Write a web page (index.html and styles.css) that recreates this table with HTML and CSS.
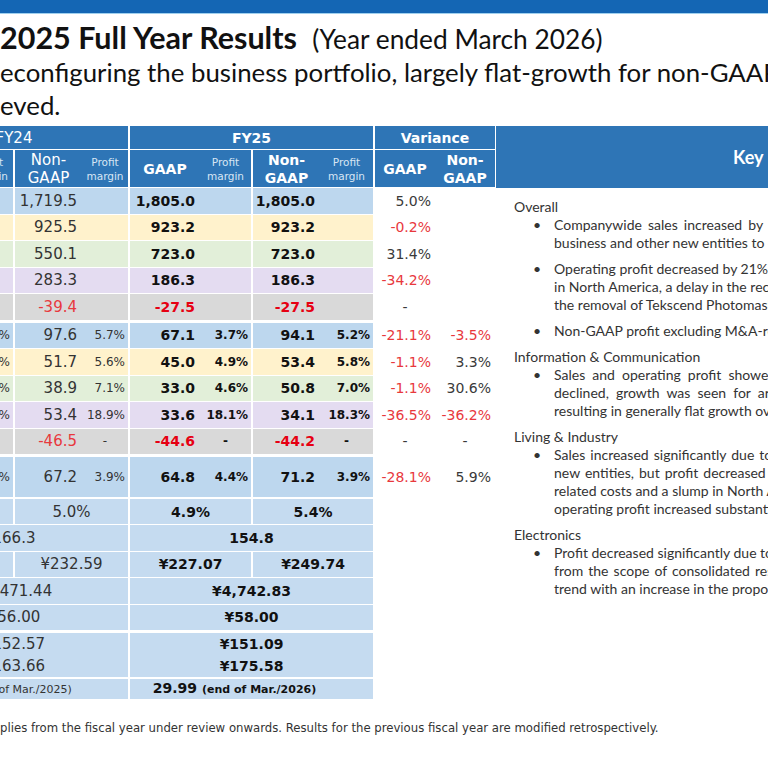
FILE: index.html
```html
<!DOCTYPE html>
<html lang="en">

<head>
    <meta charset="UTF-8">
    <meta name="viewport" content="width=device-width, initial-scale=1.0">
    <title>FY2025 Full Year Results</title>
    <link rel="stylesheet" href="styles.css">
</head>

<body>
    <div class="topbar"></div>
    <div class="title">
        <h1>2025 Full Year Results <span class="title-sub">(Year ended March 2026)</span></h1>
        <p class="lead">econfiguring the business portfolio, largely flat-growth for non-GAAP</p>
        <p class="lead">eved.</p>
    </div>

    <div class="main">
        <table class="results">
            <colgroup>
                <col style="width:66px"><col style="width:47px">
                <col style="width:69px"><col style="width:46px">
                <col style="width:72px"><col style="width:51px">
                <col style="width:69px"><col style="width:53px">
                <col style="width:62px"><col style="width:60px">
            </colgroup>
            <thead>
                <tr class="head1">
                    <th colspan="4">FY24</th>
                    <th colspan="4" class="gs b">FY25</th>
                    <th colspan="2" class="gs b small">Variance</th>
                </tr>
                <tr class="head2">
                    <th>GAAP</th>
                    <th class="pm-h">Profit<br>margin</th>
                    <th class="gs">Non-<br>GAAP</th>
                    <th class="pm-h">Profit<br>margin</th>
                    <th class="gs b">GAAP</th>
                    <th class="pm-h">Profit<br>margin</th>
                    <th class="gs b">Non-<br>GAAP</th>
                    <th class="pm-h">Profit<br>margin</th>
                    <th class="gs b small">GAAP</th>
                    <th class="b small">Non-<br>GAAP</th>
                </tr>
            </thead>
            <tbody>
                <tr class="blue">
                    <td class="val">1,719.5</td><td class="pm"></td>
                    <td class="val gs">1,719.5</td><td class="pm"></td>
                    <td class="val gs b">1,805.0</td><td class="pm"></td>
                    <td class="val gs b">1,805.0</td><td class="pm"></td>
                    <td class="var gs">5.0%</td><td class="var"></td>
                </tr>
                <tr class="yellow">
                    <td class="val">925.5</td><td class="pm"></td>
                    <td class="val gs">925.5</td><td class="pm"></td>
                    <td class="val gs b">923.2</td><td class="pm"></td>
                    <td class="val gs b">923.2</td><td class="pm"></td>
                    <td class="var gs neg">-0.2%</td><td class="var"></td>
                </tr>
                <tr class="green">
                    <td class="val">550.1</td><td class="pm"></td>
                    <td class="val gs">550.1</td><td class="pm"></td>
                    <td class="val gs b">723.0</td><td class="pm"></td>
                    <td class="val gs b">723.0</td><td class="pm"></td>
                    <td class="var gs">31.4%</td><td class="var"></td>
                </tr>
                <tr class="purple">
                    <td class="val">283.3</td><td class="pm"></td>
                    <td class="val gs">283.3</td><td class="pm"></td>
                    <td class="val gs b">186.3</td><td class="pm"></td>
                    <td class="val gs b">186.3</td><td class="pm"></td>
                    <td class="var gs neg">-34.2%</td><td class="var"></td>
                </tr>
                <tr class="grey">
                    <td class="val neg">-39.4</td><td class="pm"></td>
                    <td class="val gs neg">-39.4</td><td class="pm"></td>
                    <td class="val gs b neg">-27.5</td><td class="pm"></td>
                    <td class="val gs b neg">-27.5</td><td class="pm"></td>
                    <td class="var gs dash">-</td><td class="var"></td>
                </tr>

                <tr class="blue sep3">
                    <td class="val">85.0</td><td class="pm">4.9%</td>
                    <td class="val gs">97.6</td><td class="pm">5.7%</td>
                    <td class="val gs b">67.1</td><td class="pm b">3.7%</td>
                    <td class="val gs b">94.1</td><td class="pm b">5.2%</td>
                    <td class="var gs neg">-21.1%</td><td class="var neg">-3.5%</td>
                </tr>
                <tr class="yellow">
                    <td class="val">45.5</td><td class="pm">4.9%</td>
                    <td class="val gs">51.7</td><td class="pm">5.6%</td>
                    <td class="val gs b">45.0</td><td class="pm b">4.9%</td>
                    <td class="val gs b">53.4</td><td class="pm b">5.8%</td>
                    <td class="var gs neg">-1.1%</td><td class="var">3.3%</td>
                </tr>
                <tr class="green">
                    <td class="val">33.4</td><td class="pm">6.1%</td>
                    <td class="val gs">38.9</td><td class="pm">7.1%</td>
                    <td class="val gs b">33.0</td><td class="pm b">4.6%</td>
                    <td class="val gs b">50.8</td><td class="pm b">7.0%</td>
                    <td class="var gs neg">-1.1%</td><td class="var">30.6%</td>
                </tr>
                <tr class="purple">
                    <td class="val">52.9</td><td class="pm">18.7%</td>
                    <td class="val gs">53.4</td><td class="pm">18.9%</td>
                    <td class="val gs b">33.6</td><td class="pm b">18.1%</td>
                    <td class="val gs b">34.1</td><td class="pm b">18.3%</td>
                    <td class="var gs neg">-36.5%</td><td class="var neg">-36.2%</td>
                </tr>
                <tr class="grey">
                    <td class="val neg">-46.3</td><td class="pm dash">-</td>
                    <td class="val gs neg">-46.5</td><td class="pm dash">-</td>
                    <td class="val gs b neg">-44.6</td><td class="pm b dash">-</td>
                    <td class="val gs b neg">-44.2</td><td class="pm b dash">-</td>
                    <td class="var gs dash">-</td><td class="var dash">-</td>
                </tr>

                <tr class="blue sep3 tall">
                    <td class="val">90.1</td><td class="pm">5.2%</td>
                    <td class="val gs">67.2</td><td class="pm">3.9%</td>
                    <td class="val gs b">64.8</td><td class="pm b">4.4%</td>
                    <td class="val gs b">71.2</td><td class="pm b">3.9%</td>
                    <td class="var gs neg">-28.1%</td><td class="var">5.9%</td>
                </tr>

                <tr class="pale sep2">
                    <td colspan="2" class="sp">5.2%</td>
                    <td colspan="2" class="sp gs">5.0%</td>
                    <td colspan="2" class="sp gs b">4.9%</td>
                    <td colspan="2" class="sp gs b">5.4%</td>
                    <td colspan="2" class="var gs"></td>
                </tr>
                <tr class="pale">
                    <td colspan="4" class="sp">166.3</td>
                    <td colspan="4" class="sp gs b">154.8</td>
                    <td colspan="2" class="var gs"></td>
                </tr>
                <tr class="pale">
                    <td colspan="2" class="sp">¥267.41</td>
                    <td colspan="2" class="sp gs">¥232.59</td>
                    <td colspan="2" class="sp gs b">¥227.07</td>
                    <td colspan="2" class="sp gs b">¥249.74</td>
                    <td colspan="2" class="var gs"></td>
                </tr>
                <tr class="pale">
                    <td colspan="4" class="sp">¥4,471.44</td>
                    <td colspan="4" class="sp gs b">¥4,742.83</td>
                    <td colspan="2" class="var gs"></td>
                </tr>
                <tr class="pale">
                    <td colspan="4" class="sp">¥56.00</td>
                    <td colspan="4" class="sp gs b">¥58.00</td>
                    <td colspan="2" class="var gs"></td>
                </tr>
                <tr class="pale sep3 double">
                    <td colspan="4" class="sp">¥152.57<br>¥163.66</td>
                    <td colspan="4" class="sp gs b">¥151.09<br>¥175.58</td>
                    <td colspan="2" class="var gs"></td>
                </tr>
                <tr class="pale sep2 short">
                    <td colspan="4" class="sp end">28.62 <span class="asof">(end of Mar./2025)</span></td>
                    <td colspan="4" class="sp gs b end">29.99 <span class="asof">(end of Mar./2026)</span></td>
                    <td colspan="2" class="var gs"></td>
                </tr>
            </tbody>
        </table>

        <div class="key">
            <div class="key-head">Key Points</div>
            <div class="key-body">
                <div class="topic">Overall</div>
                <ul>
                    <li><span class="dot">•</span>
                        <div>
                            <span class="ln j1">Companywide sales increased by 5%</span>
                            <span class="ln">business and other new entities to consolidation</span>
                        </div>
                    </li>
                    <li><span class="dot">•</span>
                        <div>
                            <span class="ln">Operating profit decreased by 21%</span>
                            <span class="ln">in North America, a delay in the recovery</span>
                            <span class="ln">the removal of Tekscend Photomask</span>
                        </div>
                    </li>
                    <li><span class="dot">•</span>
                        <div>
                            <span class="ln">Non-GAAP profit excluding M&amp;A-related</span>
                        </div>
                    </li>
                </ul>
                <div class="topic">Information &amp; Communication</div>
                <ul>
                    <li><span class="dot">•</span>
                        <div>
                            <span class="ln j2">Sales and operating profit showed</span>
                            <span class="ln j2">declined, growth was seen for areas</span>
                            <span class="ln">resulting in generally flat growth overall</span>
                        </div>
                    </li>
                </ul>
                <div class="topic">Living &amp; Industry</div>
                <ul>
                    <li><span class="dot">•</span>
                        <div>
                            <span class="ln j3">Sales increased significantly due to</span>
                            <span class="ln j3">new entities, but profit decreased</span>
                            <span class="ln">related costs and a slump in North America</span>
                            <span class="ln">operating profit increased substantially</span>
                        </div>
                    </li>
                </ul>
                <div class="topic">Electronics</div>
                <ul>
                    <li><span class="dot">•</span>
                        <div>
                            <span class="ln">Profit decreased significantly due to</span>
                            <span class="ln j3">from the scope of consolidated results</span>
                            <span class="ln">trend with an increase in the proportion</span>
                        </div>
                    </li>
                </ul>
            </div>
        </div>
    </div>

    <p class="note">plies from the fiscal year under review onwards. Results for the previous fiscal year are modified retrospectively.</p>
</body>

</html>
```

FILE: styles.css
```css
body {
    margin: 0;
    width: 768px;
    height: 768px;
    overflow: hidden;
    background-color: #fff;
    font-family: Lato, "Open Sans", sans-serif;
    color: #111;
}
.topbar {
    height: 13px;
    background-color: #1466b4;
    border-bottom: 1px solid #9fd0ee;
}
.title {
    padding-top: 6px;
    white-space: nowrap;
}
.title h1 {
    margin: 0;
    font-size: 30.5px;
    line-height: 34px;
    font-weight: 700;
}
.title-sub {
    font-size: 26.3px;
    font-weight: 400;
    margin-left: 8px;
}
.lead {
    margin: 0;
    font-size: 25.8px;
    line-height: 33px;
}

.main {
    display: flex;
    align-items: flex-start;
    margin-top: 4px;
    margin-left: -100px;
}

/* results table */
.results {
    flex: none;
    width: 595px;
    table-layout: fixed;
    border-collapse: separate;
    border-spacing: 0;
    font-family: "DejaVu Sans", Verdana, sans-serif;
    font-size: 15px;
    color: #333;
}
.results th, .results td {
    padding: 0;
    border-top: 1px solid #fff;
    white-space: nowrap;
}
.results .gs {
    border-left: 2px solid #fff;
}
.results th {
    background-color: #2e75b6;
    color: #fff;
    font-weight: 400;
    text-align: center;
    line-height: 18px;
}
.results th.b {
    font-weight: 700;
    font-size: 14px;
}
.results th.small {
    font-size: 14px;
}
.head1 th {
    border-top: none;
    height: 23px;
}
.head2 th {
    height: 37px;
}
.results th.pm-h {
    font-size: 10.5px;
    line-height: 14px;
    color: #d8e6f4;
}

.results td {
    height: 25.5px;
}
.val {
    text-align: right;
    padding-right: 5px !important;
}
.pm {
    text-align: right;
    padding-right: 3px !important;
    font-size: 12px;
}
.var {
    background-color: #fff;
    text-align: right;
    padding-right: 4px !important;
    font-size: 14px;
    color: #3a3a3a;
}
.sp {
    text-align: center;
}
.results td.b {
    font-weight: 700;
    font-size: 14px;
    color: #111;
}
.results td.pm.b {
    font-size: 12px;
}
.results td.neg {
    color: #e8383d;
}
.results td.b.neg {
    color: #e60012;
}
.results td.dash {
    text-align: center;
    padding-right: 0 !important;
}

.blue td { background-color: #bdd7ee; }
.yellow td { background-color: #fff2cc; }
.green td { background-color: #e2efd9; }
.purple td { background-color: #e4dcf1; }
.grey td { background-color: #d9d9d9; }
.pale td { background-color: #c5dbf0; }
.results td.var { background-color: #fff; }

.sep3 td { border-top-width: 3px; }
.sep2 td { border-top-width: 2px; }
.tall td { height: 40px; }
.pale.sep2 td { height: 25px; }
.double td {
    height: 43px;
    line-height: 22px;
}
.pale.short td {
    height: 19px;
    line-height: 18px;
}
.end {
    padding-right: 34px !important;
}
.asof {
    font-size: 11px;
}

/* key points */
.key {
    flex: none;
    width: 480px;
    margin-left: 1px;
}
.key-head {
    height: 62px;
    line-height: 62px;
    background-color: #2e75b6;
    color: #fff;
    font-size: 18px;
    font-weight: 700;
    padding-left: 237px;
}
.key-body {
    padding: 10px 0 0 18px;
    font-size: 14px;
    line-height: 18px;
    color: #333;
}
.key-body ul {
    margin: 0;
    padding: 0;
    list-style: none;
}
.key-body li {
    display: flex;
    padding-left: 19px;
    margin-bottom: 8px;
}
.dot {
    width: 21px;
    flex: none;
}
.ln {
    display: block;
    white-space: nowrap;
}
.j1 { word-spacing: 2.5px; }
.j2 { word-spacing: 3.5px; }
.j3 { word-spacing: 1.5px; }

.note {
    margin: 21px 0 0;
    font-family: "DejaVu Sans Condensed", "DejaVu Sans", sans-serif;
    font-size: 13px;
    line-height: 16px;
    color: #333;
    white-space: nowrap;
}
```
